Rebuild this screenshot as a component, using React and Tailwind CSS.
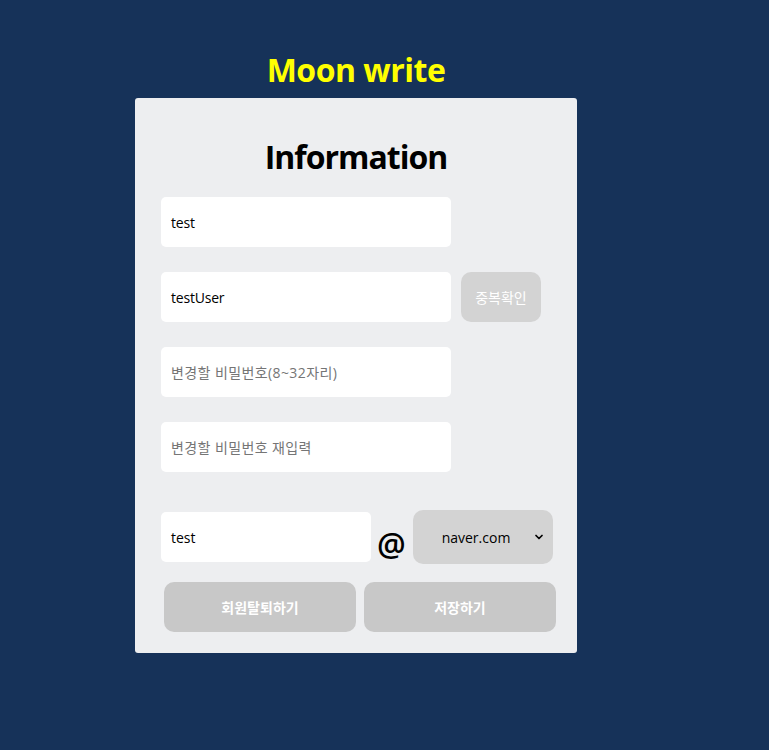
import { ChevronDown } from 'lucide-react'

const FONT = { fontFamily: '"Open Sans", "Noto Sans CJK KR", sans-serif' }

function Field({ value, placeholder }) {
  return (
    <div className="w-[290px] h-[50px] shrink-0 rounded-[5px] bg-white flex items-center pl-[10px] text-[14px]">
      {value ? <span className="text-black tracking-[-0.2px]">{value}</span> : <span className="text-[#757575] tracking-[0.4px]">{placeholder}</span>}
    </div>
  )
}

export default function App() {
  return (
    <div className="min-h-[750px] bg-[#163259] pt-[50px]" style={FONT}>
      <div className="w-[442px] ml-[135px]">
        <h1 className="text-center text-[32px] leading-[40px] font-bold tracking-[-0.5px] text-[#ffff00]">Moon write</h1>
        <div className="mt-[8px] bg-[#edeef0] rounded-[3px] pt-[39px] pb-[21px] pl-[26px] pr-[20px]">
          <h2 className="text-center text-[32px] leading-[40px] font-bold tracking-[-1px] text-black pr-[6px]">Information</h2>
          <div className="mt-[20px] flex flex-col gap-[25px]">
            <Field value="test" />
            <div className="flex gap-[10px]">
              <Field value="testUser" />
              <button className="w-[80px] h-[50px] shrink-0 rounded-[10px] bg-[#d3d3d3] text-white text-[14px]">중복확인</button>
            </div>
            <Field placeholder="변경할 비밀번호(8~32자리)" />
            <Field placeholder="변경할 비밀번호 재입력" />
          </div>
          <div className="mt-[38px] flex items-end">
            <div className="w-[210px] h-[50px] shrink-0 mb-[2px] rounded-[5px] bg-white flex items-center pl-[10px] text-[14px] text-black">test</div>
            <span className="ml-[6px] w-[32px] shrink-0 text-[32px] leading-[40px] font-semibold text-black">@</span>
            <div className="ml-[4px] w-[140px] h-[54px] shrink-0 rounded-[10px] bg-[#d3d3d3] flex items-center pl-[6px] pr-[8px] text-[14px] text-black">
              <span className="flex-1 text-center">naver.com</span>
              <ChevronDown size={12} strokeWidth={3.5} />
            </div>
          </div>
          <div className="mt-[18px] flex gap-[8px] pl-[3px]">
            <button className="w-[192px] h-[50px] shrink-0 rounded-[10px] bg-[#c8c8c8] text-white text-[14px] font-bold">회원탈퇴하기</button>
            <button className="w-[192px] h-[50px] shrink-0 rounded-[10px] bg-[#c8c8c8] text-white text-[14px] font-bold">저장하기</button>
          </div>
        </div>
      </div>
    </div>
  )
}
